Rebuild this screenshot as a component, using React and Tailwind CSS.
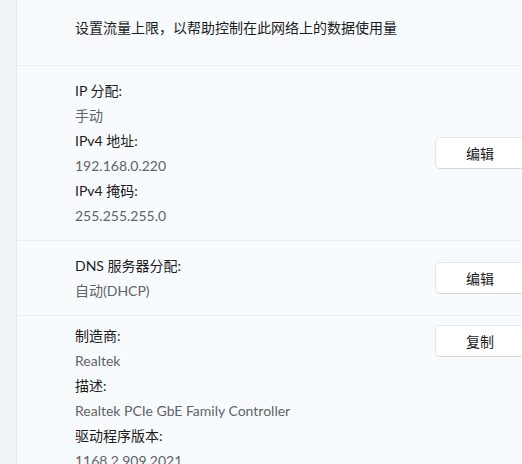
const FONT = { fontFamily: 'Lato, "Noto Sans CJK SC", sans-serif' };

function Line({ children, muted }) {
    return (
        <div className={`h-[25px] leading-[25px] text-[14px] ${muted ? "text-[#5f6368]" : "text-[#1b1b1b]"}`}>
            {children}
        </div>
    );
}

function Btn({ children }) {
    return (
        <button className="h-[32px] w-[90px] shrink-0 rounded-[5px] border border-[#e3e6e9] border-b-[#d2d5d8] bg-white text-[14px] text-[#1b1b1b]">
            {children}
        </button>
    );
}

export default function App() {
    return (
        <div className="h-[464px] w-[522px] overflow-hidden bg-[#eef4f7]" style={FONT}>
            <div className="ml-[16px] w-[560px] min-h-[464px] border-l border-[#e3ebef] bg-[#f8fbfd]">
                {/* 流量 */}
                <div className="h-[65px] pl-[58px] pt-[15px] text-[14px] leading-[25px] text-[#1b1b1b]">
                    设置流量上限，以帮助控制在此网络上的数据使用量
                </div>

                {/* IP */}
                <div className="flex items-center border-t border-[#e8eef1] pl-[58px] pr-[51px] pt-[12px] pb-[12px]">
                    <div className="flex-1">
                        <Line>IP 分配:</Line>
                        <Line muted>手动</Line>
                        <Line>IPv4 地址:</Line>
                        <Line muted>192.168.0.220</Line>
                        <Line>IPv4 掩码:</Line>
                        <Line muted>255.255.255.0</Line>
                    </div>
                    <Btn>编辑</Btn>
                </div>

                {/* DNS */}
                <div className="flex items-center border-t border-[#e8eef1] pl-[58px] pr-[51px] pt-[12px] pb-[12px]">
                    <div className="flex-1">
                        <Line>DNS 服务器分配:</Line>
                        <Line muted>自动(DHCP)</Line>
                    </div>
                    <Btn>编辑</Btn>
                </div>

                {/* 适配器 */}
                <div className="flex items-start border-t border-[#e8eef1] pl-[58px] pr-[51px] pt-[7px]">
                    <div className="flex-1">
                        <Line>制造商:</Line>
                        <Line muted>Realtek</Line>
                        <Line>描述:</Line>
                        <Line muted>Realtek PCIe GbE Family Controller</Line>
                        <Line>驱动程序版本:</Line>
                        <Line muted>1168.2.909.2021</Line>
                    </div>
                    <div className="pt-[2px]">
                        <Btn>复制</Btn>
                    </div>
                </div>
            </div>
        </div>
    );
}
